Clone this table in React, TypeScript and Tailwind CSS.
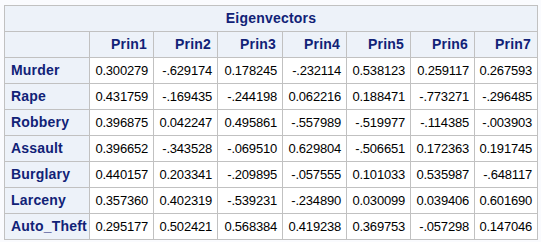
import { Fragment } from "react";

const columns = ["Prin1", "Prin2", "Prin3", "Prin4", "Prin5", "Prin6", "Prin7"];

const rows: [string, string[]][] = [
    ["Murder", ["0.300279", "-.629174", "0.178245", "-.232114", "0.538123", "0.259117", "0.267593"]],
    ["Rape", ["0.431759", "-.169435", "-.244198", "0.062216", "0.188471", "-.773271", "-.296485"]],
    ["Robbery", ["0.396875", "0.042247", "0.495861", "-.557989", "-.519977", "-.114385", "-.003903"]],
    ["Assault", ["0.396652", "-.343528", "-.069510", "0.629804", "-.506651", "0.172363", "0.191745"]],
    ["Burglary", ["0.440157", "0.203341", "-.209895", "-.057555", "0.101033", "0.535987", "-.648117"]],
    ["Larceny", ["0.357360", "0.402319", "-.539231", "-.234890", "0.030099", "0.039406", "0.601690"]],
    ["Auto_Theft", ["0.295177", "0.502421", "0.568384", "0.419238", "0.369753", "-.057298", "0.147046"]],
];

const head = "flex h-[25px] items-center bg-[#edf2f9] text-[14px] font-bold tracking-[0.2px] text-[#112277]";
const cell = "flex h-[25px] items-center justify-end bg-white pr-[5px] text-[13px] tracking-[-0.2px] text-black";

export default function App() {
    return (
        <div className="h-[242px] w-[541px] bg-[#fafbfe] pl-[4px] pt-[5px] font-['Liberation_Sans',Arial,sans-serif]">
            <div className="grid w-[534px] grid-cols-[84px_63px_63px_64px_63px_63px_63px_62px] gap-px bg-[#c1c1c1] p-px">
                <div className={`${head} col-span-8 justify-center`}>Eigenvectors</div>

                <div className="h-[25px] bg-[#edf2f9]" />
                {columns.map((c) => (
                    <div key={c} className={`${head} justify-end pr-[6px]`}>
                        {c}
                    </div>
                ))}

                {rows.map(([label, values]) => (
                    <Fragment key={label}>
                        <div className={`${head} pl-[6px]`}>{label}</div>
                        {values.map((v, i) => (
                            <div key={i} className={cell}>
                                {v}
                            </div>
                        ))}
                    </Fragment>
                ))}
            </div>
        </div>
    );
}
